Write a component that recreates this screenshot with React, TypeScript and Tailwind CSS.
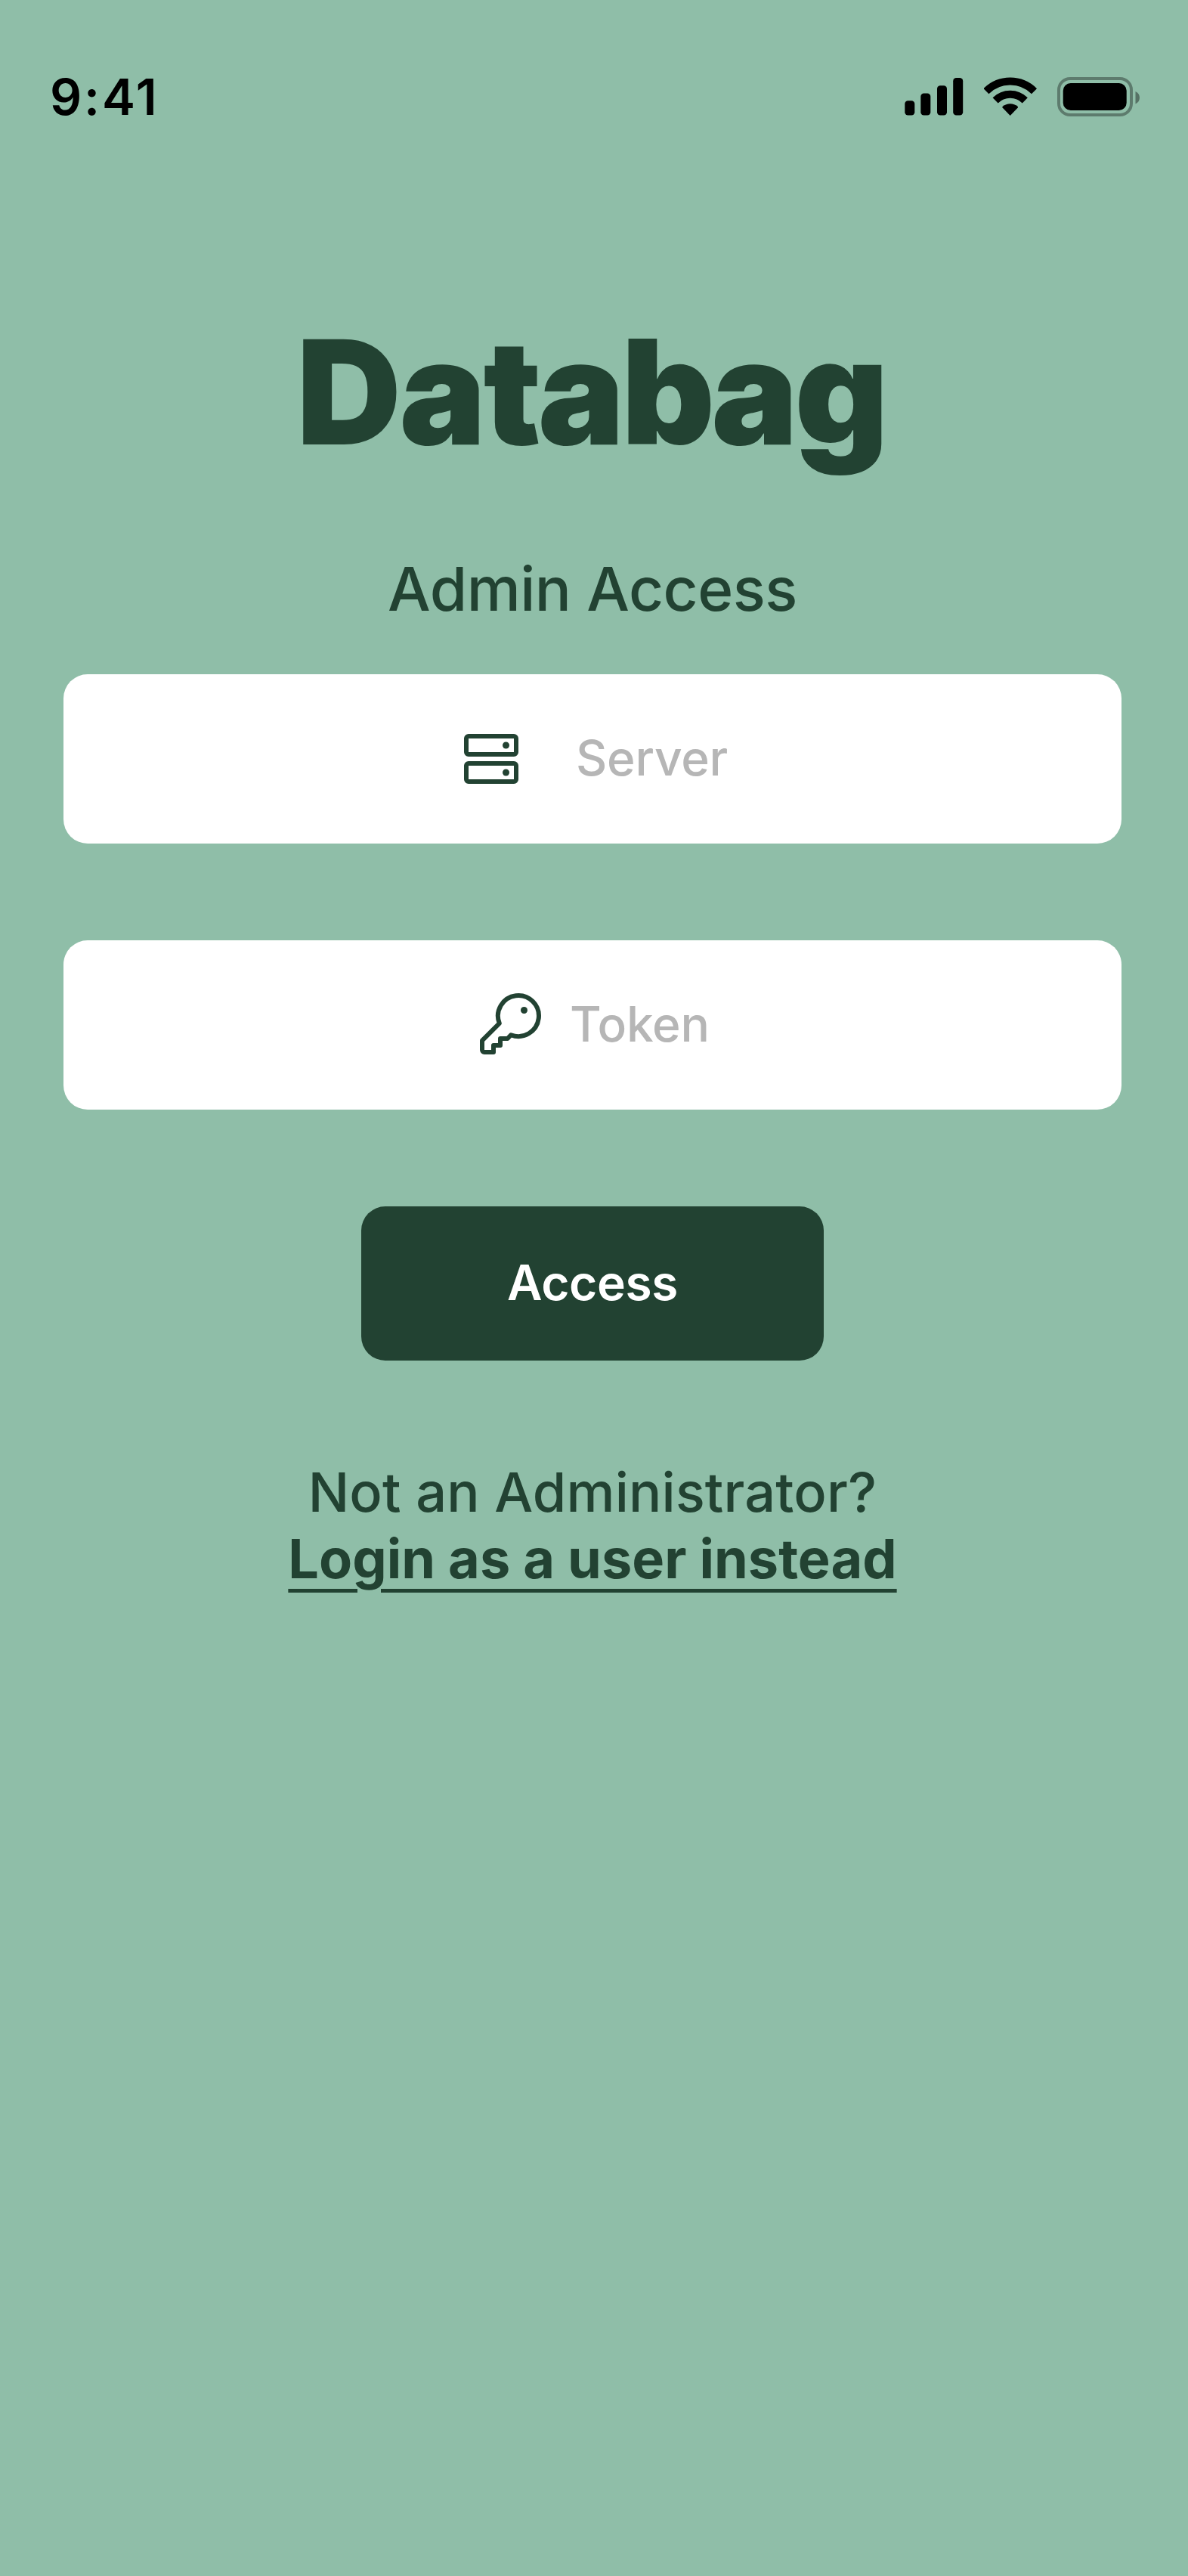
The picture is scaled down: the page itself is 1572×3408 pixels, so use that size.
function SignalIcon() {
  return (
    <svg width="78" height="52" viewBox="0 0 78 52" aria-label="Signal">
      <rect x="0.3" y="31.3" width="13" height="19.3" rx="4.2" />
      <rect x="21.3" y="21.6" width="13" height="29" rx="4.2" />
      <rect x="43" y="11.2" width="13" height="39.4" rx="4.2" />
      <rect x="64.2" y="1" width="13" height="49.6" rx="4.2" />
    </svg>
  );
}

function WifiIcon() {
  return (
    <svg width="70" height="52" viewBox="0 0 70 52" aria-label="Wi-Fi">
      <g fill="none" stroke="#000" strokeWidth="10">
        <path d="M3.2 18.7A45 45 0 0 1 66.8 18.7" transform="translate(-0.3 0)" />
        <path d="M15.4 30.9A27.7 27.7 0 0 1 54.6 30.9" transform="translate(-0.3 0)" />
      </g>
      <path d="M34.7 51L24.6 40.4Q24 39.6 24.8 38.8A15.5 15.5 0 0 1 44.6 38.8Q45.4 39.6 44.8 40.4Z" />
    </svg>
  );
}

function BatteryIcon() {
  return (
    <svg width="109" height="52" viewBox="0 0 109 52" aria-label="Battery">
      <rect x="2" y="2" width="96" height="48" rx="15" fill="none" stroke="#000" strokeOpacity="0.35" strokeWidth="4" />
      <rect x="7.7" y="8" width="84" height="36" rx="10" />
      <path d="M103.5 19V35.5C107 34 109 30.7 109 27.2S107 20.5 103.5 19Z" fillOpacity="0.4" />
    </svg>
  );
}

function ServerIcon() {
  return (
    <svg width="96" height="96" viewBox="0 0 32 32" fill="none" stroke="#224232" strokeWidth="2">
      <rect x="5" y="6" width="22" height="8" rx="1" />
      <rect x="5" y="18" width="22" height="8" rx="1" />
      <circle cx="22.5" cy="10" r="1.5" fill="#224232" stroke="none" />
      <circle cx="22.5" cy="22" r="1.5" fill="#224232" stroke="none" />
    </svg>
  );
}

function KeyIcon() {
  return (
    <svg width="81" height="81" viewBox="0 0 27 27" fill="none" stroke="#224232" strokeWidth="2" strokeLinejoin="round" className="mb-[3px]">
      <path d="M8.6 13.3L1 20.9V25a1 1 0 0 0 1 1H6V23H9V20H12.2L13.7 18.4A9 9 0 1 0 8.6 13.3Z" />
      <circle cx="19.5" cy="7.5" r="1.5" fill="#224232" stroke="none" />
    </svg>
  );
}

export default function App() {
  return (
    <main className="flex h-[3408px] w-[1572px] flex-col items-center bg-[#8fbea8] pr-1 font-['Inter',sans-serif] text-[#224232]">
      <header className="flex h-[256px] w-[1572px] items-center justify-between self-start pr-[64px] pl-[66px] text-black">
        <span className="text-[66px] leading-[68px] font-semibold tracking-[2.9px]">9:41</span>
        <div className="flex items-center gap-[27px]">
          <SignalIcon />
          <WifiIcon />
          <BatteryIcon />
        </div>
      </header>

      <h1 className="mt-[142px] font-['Inter_Tight','Inter',sans-serif] text-[192px] leading-[240px] font-black">Databag</h1>
      <p className="mt-[93px] text-[80px] leading-[96px] font-medium tracking-[-0.5px]">Admin Access</p>

      <div className="mt-[65px] flex h-[224px] w-[1400px] items-center rounded-[32px] bg-white pl-[518px] text-[64px] leading-[78px] font-medium tracking-[-0.25px] text-[#b6b6b6]">
        <ServerIcon />
        <span className="mb-[2px] ml-16">Server</span>
      </div>
      <div className="mt-[128px] flex h-[224px] w-[1400px] items-center rounded-[32px] bg-white pl-[551px] text-[64px] leading-[78px] font-medium tracking-[-0.25px] text-[#b6b6b6]">
        <KeyIcon />
        <span className="mb-[2px] ml-[38px]">Token</span>
      </div>

      <button className="mt-[128px] h-[204px] w-[612px] rounded-[32px] bg-[#224232] pb-[2px] text-[64px] leading-[78px] font-semibold tracking-[-0.4px] text-white">
        Access
      </button>

      <p className="mt-[130px] text-[72px] leading-[88px] font-medium tracking-[0.2px]">Not an Administrator?</p>
      <a href="#" className="text-[72px] leading-[88px] font-bold underline decoration-[5px] underline-offset-[14px]">
        Login as a user instead
      </a>
    </main>
  );
}
